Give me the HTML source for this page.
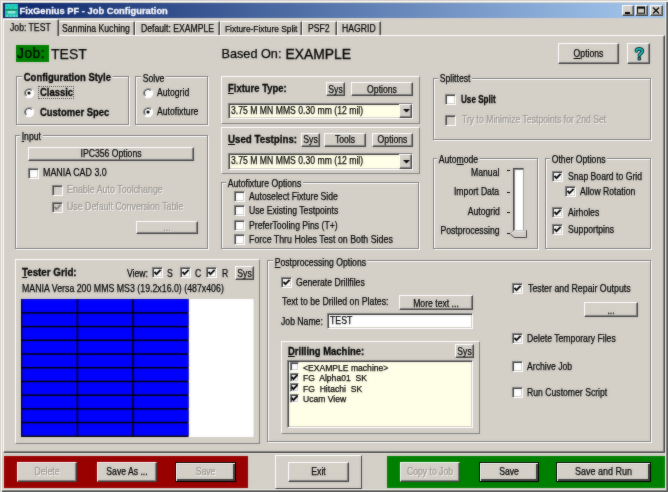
<!DOCTYPE html><html><head><meta charset="utf-8"><style>
html,body{margin:0;padding:0;background:#d4d0c8;}
body{width:668px;height:492px;background:#d4d0c8;position:relative;overflow:hidden;font-family:"Liberation Sans",sans-serif;color:#000;}
div,svg{position:absolute;box-sizing:border-box;}
.L{left:0;top:0;width:668px;height:492px;background:#d4d0c8;overflow:hidden;}
.t{white-space:nowrap;line-height:normal;-webkit-text-stroke:0.25px currentColor;}
.dis{color:#9a968f;text-shadow:1px 1px 0 #fff;}
.btn{background:#d4d0c8;border-top:1px solid #fff;border-left:1px solid #fff;border-right:1px solid #404040;border-bottom:1px solid #404040;box-shadow:inset -1px -1px 0 #808080;}
.btn.def{border:1px solid #000;box-shadow:inset 1px 1px 0 #fff,inset -2px -2px 0 #404040,inset -1px -1px 0 #808080;}
.grp{border:1px solid #808080;box-shadow:inset 1px 1px 0 #fff,1px 1px 0 #fff;}
.chk{background:#fff;border-top:1px solid #808080;border-left:1px solid #808080;border-right:1px solid #fff;border-bottom:1px solid #fff;box-shadow:inset 1px 1px 0 #404040,inset -1px -1px 0 #d4d0c8;}
.chk.cdis{background:#d4d0c8;}
.rz{border-top:1px solid #fff;border-left:1px solid #fff;border-right:1px solid #808080;border-bottom:1px solid #808080;}
.sk{border-top:1px solid #808080;border-left:1px solid #808080;border-right:1px solid #fff;border-bottom:1px solid #fff;box-shadow:inset 1px 1px 0 #404040,inset -1px -1px 0 #d4d0c8;}
</style></head><body>
<div class="L" style="filter:blur(1px)"><div class="" style="left:0px;top:0px;width:668px;height:492px;box-shadow:inset 1px 1px 0 #d4d0c8,inset 2px 2px 0 #fff,inset -1px -1px 0 #404040,inset -2px -2px 0 #808080,inset -3px -3px 0 #f4f2ec;"></div>
<div class="" style="left:3px;top:3px;width:662px;height:15px;background:linear-gradient(to right,#0a246a,#a6caf0);"></div>
<svg style="left:5px;top:4px" width="13" height="13" viewBox="0 0 13 13"><rect width="13" height="13" fill="#1cc4b4"/><rect x="0.5" y="0.5" width="12" height="4.5" fill="#26dcc8"/><path d="M2 2h1.2v1H2zM5 1.5h1.2v1H5zM8 2h1.2v1H8zM10.5 1.5h1.2v1h-1.2zM3.5 3.6h1.2v1H3.5zM7 3.6h1.2v1H7z" fill="#0a9080"/><rect x="0.5" y="5.2" width="12" height="1.3" fill="#0c7a40"/><path d="M2.2 7 H10.8 L9.8 9.6 H3.2 Z" fill="#9ee6dc"/><path d="M1 11.6h2v1H1zM4.5 11.6h2v1h-2zM8 11.6h2v1H8zM11 11.6h1.5v1H11z" fill="#c8f4ee"/></svg>
<div class="t " style="top:5.95px;font-size:9.34px;left:19.6px;transform-origin:0 0;font-weight:700;-webkit-text-stroke:0.3px currentColor;color:#fff;">FixGenius PF - Job Configuration</div>
<div class="btn" style="left:622px;top:5px;width:12px;height:11px;"></div>
<div class="btn" style="left:635px;top:5px;width:13px;height:11px;"></div>
<div class="btn" style="left:650px;top:5px;width:13px;height:11px;"></div>
<svg style="left:622px;top:5px" width="41" height="11" viewBox="0 0 41 11"><rect x="3" y="7" width="5" height="2" fill="#000"/><rect x="15.5" y="2.2" width="7" height="6" fill="none" stroke="#000" stroke-width="1"/><rect x="15" y="1.7" width="8" height="2" fill="#000"/><path d="M31 2.5 L37 8.5 M37 2.5 L31 8.5" stroke="#000" stroke-width="1.4"/></svg>
<div class="" style="left:58px;top:21px;width:77px;height:15px;border-top:1px solid #fff;border-left:1px solid #fff;border-right:1px solid #404040;box-shadow:inset -1px 0 0 #808080;background:#d4d0c8;"></div>
<div class="t " style="top:22.99px;font-size:10.18px;left:62px;transform-origin:0 0;transform:scaleX(0.85);">Sanmina Kuching</div>
<div class="" style="left:135px;top:21px;width:85px;height:15px;border-top:1px solid #fff;border-left:1px solid #fff;border-right:1px solid #404040;box-shadow:inset -1px 0 0 #808080;background:#d4d0c8;"></div>
<div class="t " style="top:22.99px;font-size:10.18px;left:141px;transform-origin:0 0;transform:scaleX(0.85);">Default: EXAMPLE</div>
<div class="" style="left:220px;top:21px;width:82px;height:15px;border-top:1px solid #fff;border-left:1px solid #fff;border-right:1px solid #404040;box-shadow:inset -1px 0 0 #808080;background:#d4d0c8;"></div>
<div class="t " style="top:23.31px;font-size:9.83px;left:224.8px;transform-origin:0 0;transform:scaleX(0.85);">Fixture-Fixture Split</div>
<div class="" style="left:302px;top:21px;width:35px;height:15px;border-top:1px solid #fff;border-left:1px solid #fff;border-right:1px solid #404040;box-shadow:inset -1px 0 0 #808080;background:#d4d0c8;"></div>
<div class="t " style="top:22.99px;font-size:10.18px;left:307.6px;transform-origin:0 0;transform:scaleX(0.85);">PSF2</div>
<div class="" style="left:337px;top:21px;width:44px;height:15px;border-top:1px solid #fff;border-left:1px solid #fff;border-right:1px solid #404040;box-shadow:inset -1px 0 0 #808080;background:#d4d0c8;"></div>
<div class="t " style="top:22.99px;font-size:10.18px;left:342px;transform-origin:0 0;transform:scaleX(0.85);">HAGRID</div>
<div class="" style="left:3px;top:35px;width:662px;height:418px;border-top:1px solid #fff;border-left:1px solid #fff;border-right:1px solid #404040;border-bottom:1px solid #404040;box-shadow:inset -1px -1px 0 #808080;"></div>
<div class="" style="left:3px;top:19px;width:56px;height:17px;border-top:1px solid #fff;border-left:1px solid #fff;border-right:1px solid #404040;box-shadow:inset -1px 0 0 #808080;background:#d4d0c8;"></div>
<div class="" style="left:4px;top:35px;width:53px;height:2px;background:#d4d0c8;"></div>
<div class="t " style="top:22.39px;font-size:10.18px;left:9.7px;transform-origin:0 0;transform:scaleX(0.85);">Job: TEST</div>
<div class="" style="left:16px;top:45px;width:33px;height:17px;background:#008000;"></div>
<div class="t " style="top:45.31px;font-size:14.8px;left:17px;transform-origin:0 0;transform:scaleX(0.93);letter-spacing:0.55px;">Job:</div>
<div class="t " style="top:45.07px;font-size:15.07px;left:51.2px;transform-origin:0 0;transform:scaleX(0.93);">TEST</div>
<div class="t " style="top:46.81px;font-size:12.7px;left:221.5px;transform-origin:0 0;">Based On:</div>
<div class="t " style="top:45.76px;font-size:13.86px;left:285.5px;transform-origin:0 0;-webkit-text-stroke:0.35px #000;">EXAMPLE</div>
<div class="btn" style="left:558px;top:43px;width:61px;height:21px;"></div>
<div class="t " style="left:558px;width:61px;text-align:center;top:47.79px;font-size:10.18px;transform:scaleX(0.85);"><u>O</u>ptions</div>
<div class="btn" style="left:627px;top:43px;width:23px;height:21px;"></div>
<svg style="left:633px;top:46px" width="12" height="15" viewBox="0 0 12 15"><path d="M3.4 5.0 C3.4 2.3 9.4 2.1 9.4 5.0 C9.4 7.2 6.4 7.4 6.4 9.4" stroke="#0a3030" stroke-width="3.6" fill="none" stroke-linecap="round"/><path d="M3.4 5.0 C3.4 2.3 9.4 2.1 9.4 5.0 C9.4 7.2 6.4 7.4 6.4 9.4" stroke="#10c0c0" stroke-width="1.7" fill="none" stroke-linecap="round"/><circle cx="6.3" cy="12.7" r="1.9" fill="#0a3030"/><circle cx="6.3" cy="12.6" r="0.9" fill="#10a0a0"/></svg>
<div class="grp" style="left:16px;top:76px;width:113px;height:49px;"></div>
<div class="t " style="top:71.17px;font-size:10.64px;left:24px;transform-origin:0 0;transform:scaleX(0.89);font-weight:700;-webkit-text-stroke:0.3px currentColor;background:#d4d0c8;padding:0 2px;margin-left:-2px;">Configuration Style</div>
<svg style="left:22.8px;top:86.8px" width="12" height="12" viewBox="0 0 12 12"><circle cx="6" cy="6" r="5.2" fill="#fff"/><path d="M9.25 2.75 A4.6 4.6 0 0 0 2.75 9.25" stroke="#808080" stroke-width="1.1" fill="none"/><path d="M8.55 3.45 A3.6 3.6 0 0 0 3.45 8.55" stroke="#404040" stroke-width="1.0" fill="none"/><circle cx="6" cy="6" r="1.6" fill="#000"/></svg>
<svg style="left:22.8px;top:105.6px" width="12" height="12" viewBox="0 0 12 12"><circle cx="6" cy="6" r="5.2" fill="#fff"/><path d="M9.25 2.75 A4.6 4.6 0 0 0 2.75 9.25" stroke="#808080" stroke-width="1.1" fill="none"/><path d="M8.55 3.45 A3.6 3.6 0 0 0 3.45 8.55" stroke="#404040" stroke-width="1.0" fill="none"/></svg>
<div style="left:38px;top:86px;width:36px;height:13px;border:1px dotted #505050;"></div>
<div class="t " style="top:86.37px;font-size:10.64px;left:39.5px;transform-origin:0 0;transform:scaleX(0.89);font-weight:700;-webkit-text-stroke:0.3px currentColor;">Classic</div>
<div class="t " style="top:105.87px;font-size:10.64px;left:39.6px;transform-origin:0 0;transform:scaleX(0.89);font-weight:700;-webkit-text-stroke:0.3px currentColor;">Customer Spec</div>
<div class="grp" style="left:135px;top:76px;width:73px;height:49px;"></div>
<div class="t " style="top:72.79px;font-size:10.18px;left:142.5px;transform-origin:0 0;transform:scaleX(0.85);background:#d4d0c8;padding:0 2px;margin-left:-2px;">Solve</div>
<svg style="left:141.5px;top:86.7px" width="12" height="12" viewBox="0 0 12 12"><circle cx="6" cy="6" r="5.2" fill="#fff"/><path d="M9.25 2.75 A4.6 4.6 0 0 0 2.75 9.25" stroke="#808080" stroke-width="1.1" fill="none"/><path d="M8.55 3.45 A3.6 3.6 0 0 0 3.45 8.55" stroke="#404040" stroke-width="1.0" fill="none"/></svg>
<svg style="left:141.5px;top:105.7px" width="12" height="12" viewBox="0 0 12 12"><circle cx="6" cy="6" r="5.2" fill="#fff"/><path d="M9.25 2.75 A4.6 4.6 0 0 0 2.75 9.25" stroke="#808080" stroke-width="1.1" fill="none"/><path d="M8.55 3.45 A3.6 3.6 0 0 0 3.45 8.55" stroke="#404040" stroke-width="1.0" fill="none"/><circle cx="6" cy="6" r="1.6" fill="#000"/></svg>
<div class="t " style="top:86.99px;font-size:10.18px;left:156.7px;transform-origin:0 0;transform:scaleX(0.85);">Autogrid</div>
<div class="t " style="top:105.99px;font-size:10.18px;left:156.7px;transform-origin:0 0;transform:scaleX(0.85);">Autofixture</div>
<div class="grp" style="left:15px;top:135px;width:193px;height:114px;"></div>
<div class="t " style="top:130.99px;font-size:10.18px;left:21.8px;transform-origin:0 0;transform:scaleX(0.85);background:#d4d0c8;padding:0 2px;margin-left:-2px;"><u>I</u>nput</div>
<div class="btn" style="left:28px;top:147px;width:166px;height:14px;"></div>
<div class="t " style="left:28px;width:166px;text-align:center;top:147.59px;font-size:10.18px;transform:scaleX(0.85);">IPC356 Options</div>
<div class="chk" style="left:28px;top:168px;width:11px;height:11px;"></div>
<div class="t " style="top:167.32px;font-size:10.47px;left:42.8px;transform-origin:0 0;transform:scaleX(0.85);">MANIA CAD 3.0</div>
<div class="chk cdis" style="left:52px;top:185px;width:11px;height:11px;"></div>
<div class="t dis" style="top:184.12px;font-size:10.47px;left:67px;transform-origin:0 0;transform:scaleX(0.85);">Enable Auto Toolchange</div>
<div class="chk cdis" style="left:52px;top:202px;width:11px;height:11px;"><svg width="11" height="11" viewBox="0 0 11 11" style="position:absolute;left:-1px;top:-1px"><path d="M2.5 4.8 L4.5 7.1 L8.6 2.9" stroke="#808080" stroke-width="1.9" fill="none"/></svg></div>
<div class="t dis" style="top:201.43px;font-size:10.35px;left:67px;transform-origin:0 0;transform:scaleX(0.85);">Use Default Conversion Table</div>
<div class="btn" style="left:136px;top:221px;width:62px;height:13px;"></div>
<div class="t dis" style="left:136px;width:62px;text-align:center;top:222.29px;font-size:10.18px;transform:scaleX(0.85);">...</div>
<div class="rz" style="left:221px;top:76px;width:199px;height:48px;"></div>
<div class="t " style="top:82.17px;font-size:10.64px;left:228.2px;transform-origin:0 0;transform:scaleX(0.89);font-weight:700;-webkit-text-stroke:0.3px currentColor;"><u>F</u>ixture Type:</div>
<div class="btn" style="left:326px;top:82px;width:19px;height:14px;"></div>
<div class="t " style="left:326px;width:19px;text-align:center;top:83.59px;font-size:10.18px;transform:scaleX(0.85);">Sys</div>
<div class="btn" style="left:351px;top:82px;width:62px;height:14px;"></div>
<div class="t " style="left:351px;width:62px;text-align:center;top:83.59px;font-size:10.18px;transform:scaleX(0.85);">Options</div>
<div class="sk" style="left:228px;top:103px;width:185px;height:16px;background:#ffffe8;"></div>
<div class="t " style="top:104.79px;font-size:10.18px;left:231px;transform-origin:0 0;transform:scaleX(0.85);">3.75 M MN MMS 0.30 mm (12 mil)</div>
<div class="btn" style="left:399px;top:104px;width:13px;height:14px;"></div>
<svg style="left:400.5px;top:107px" width="11" height="8" viewBox="0 0 11 8"><path d="M2 2 H9 L5.5 5.5 Z" fill="#000"/></svg>
<div class="rz" style="left:221px;top:127px;width:199px;height:47px;"></div>
<div class="t " style="top:132.7px;font-size:10.94px;left:228.2px;transform-origin:0 0;transform:scaleX(0.89);font-weight:700;-webkit-text-stroke:0.3px currentColor;"><u>U</u>sed Testpins:</div>
<div class="btn" style="left:301px;top:133px;width:19px;height:14px;"></div>
<div class="t " style="left:301px;width:19px;text-align:center;top:133.59px;font-size:10.18px;transform:scaleX(0.85);">Sys</div>
<div class="btn" style="left:324px;top:133px;width:42px;height:14px;"></div>
<div class="t " style="left:324px;width:42px;text-align:center;top:133.59px;font-size:10.18px;transform:scaleX(0.85);">Tools</div>
<div class="btn" style="left:372px;top:133px;width:41px;height:14px;"></div>
<div class="t " style="left:372px;width:41px;text-align:center;top:133.59px;font-size:10.18px;transform:scaleX(0.85);">Options</div>
<div class="sk" style="left:228px;top:153px;width:185px;height:17px;background:#ffffe8;"></div>
<div class="t " style="top:155.09px;font-size:10.18px;left:231px;transform-origin:0 0;transform:scaleX(0.85);">3.75 M MN MMS 0.30 mm (12 mil)</div>
<div class="btn" style="left:399px;top:154px;width:13px;height:15px;"></div>
<svg style="left:400.5px;top:157.5px" width="11" height="8" viewBox="0 0 11 8"><path d="M2 2 H9 L5.5 5.5 Z" fill="#000"/></svg>
<div class="grp" style="left:221px;top:182px;width:198px;height:67px;"></div>
<div class="t " style="top:177.59px;font-size:10.18px;left:227.8px;transform-origin:0 0;transform:scaleX(0.85);background:#d4d0c8;padding:0 2px;margin-left:-2px;">Autofixture Options</div>
<div class="chk" style="left:234px;top:191px;width:11px;height:11px;"></div>
<div class="t " style="top:191.09px;font-size:10.18px;left:249.3px;transform-origin:0 0;transform:scaleX(0.85);">Autoselect Fixture Side</div>
<div class="chk" style="left:234px;top:205px;width:11px;height:11px;"></div>
<div class="t " style="top:205.09px;font-size:10.18px;left:249.3px;transform-origin:0 0;transform:scaleX(0.85);">Use Existing Testpoints</div>
<div class="chk" style="left:234px;top:220px;width:11px;height:11px;"></div>
<div class="t " style="top:220.09px;font-size:10.18px;left:249.3px;transform-origin:0 0;transform:scaleX(0.85);">PreferTooling Pins (T+)</div>
<div class="chk" style="left:234px;top:234px;width:11px;height:11px;"></div>
<div class="t " style="top:233.91px;font-size:10.38px;left:249.3px;transform-origin:0 0;transform:scaleX(0.85);">Force Thru Holes Test on Both Sides</div>
<div class="grp" style="left:433px;top:78px;width:218px;height:62px;"></div>
<div class="t " style="top:73.39px;font-size:10.18px;left:439.6px;transform-origin:0 0;transform:scaleX(0.85);background:#d4d0c8;padding:0 2px;margin-left:-2px;">Splittest</div>
<div class="chk" style="left:445px;top:94px;width:11px;height:11px;"></div>
<div class="t " style="top:92.64px;font-size:11.45px;left:461px;transform-origin:0 0;transform:scaleX(0.71);font-weight:700;-webkit-text-stroke:0.3px currentColor;">Use Split</div>
<div class="chk cdis" style="left:445px;top:115px;width:11px;height:11px;"></div>
<div class="t dis" style="top:114.39px;font-size:10.18px;left:461.8px;transform-origin:0 0;transform:scaleX(0.85);">Try to Minimize Testpoints for 2nd Set</div>
<div class="grp" style="left:433px;top:158px;width:105px;height:91px;"></div>
<div class="t " style="top:154.29px;font-size:10.18px;left:439px;transform-origin:0 0;transform:scaleX(0.85);background:#d4d0c8;padding:0 2px;margin-left:-2px;">Auto<u>m</u>ode</div>
<div class="t " style="top:166.99px;font-size:10.18px;right:168.4px;transform-origin:100% 0;transform:scaleX(0.85);">Manual</div>
<div class="t " style="top:186.39px;font-size:10.18px;right:168.4px;transform-origin:100% 0;transform:scaleX(0.85);">Import Data</div>
<div class="t " style="top:205.79px;font-size:10.18px;right:168.4px;transform-origin:100% 0;transform:scaleX(0.85);">Autogrid</div>
<div class="t " style="top:224.59px;font-size:10.18px;right:168.4px;transform-origin:100% 0;transform:scaleX(0.85);">Postprocessing</div>
<div style="left:506.5px;top:170.2px;width:3px;height:1.2px;background:#000;"></div>
<div style="left:506.5px;top:191.5px;width:3px;height:1.2px;background:#000;"></div>
<div style="left:506.5px;top:212.2px;width:3px;height:1.2px;background:#000;"></div>
<div style="left:506.5px;top:232.9px;width:3px;height:1.2px;background:#000;"></div>
<div class="" style="left:513px;top:168px;width:11px;height:69px;background:#fff;border-top:1px solid #404040;border-left:1px solid #404040;border-right:1px solid #a0a0a0;box-shadow:inset 1px 1px 0 #808080;"></div>
<svg style="left:510px;top:229.5px" width="18" height="8" viewBox="0 0 18 8"><path d="M0.5 4 L4 0.5 H16.5 V7.5 H4 Z" fill="#d4d0c8" stroke="#404040" stroke-width="1"/><path d="M0.8 4 L4 0.8 H16" stroke="#fff" stroke-width="1" fill="none"/></svg>
<div class="grp" style="left:545px;top:158px;width:106px;height:91px;"></div>
<div class="t " style="top:154.29px;font-size:10.18px;left:552px;transform-origin:0 0;transform:scaleX(0.85);background:#d4d0c8;padding:0 2px;margin-left:-2px;">Other Options</div>
<div class="chk" style="left:552px;top:171px;width:11px;height:11px;"><svg width="11" height="11" viewBox="0 0 11 11" style="position:absolute;left:-1px;top:-1px"><path d="M2.5 4.8 L4.5 7.1 L8.6 2.9" stroke="#000" stroke-width="1.9" fill="none"/></svg></div>
<div class="t " style="top:171.39px;font-size:10.18px;left:568px;transform-origin:0 0;transform:scaleX(0.85);">Snap Board to Grid</div>
<div class="chk" style="left:565px;top:186px;width:11px;height:11px;"><svg width="11" height="11" viewBox="0 0 11 11" style="position:absolute;left:-1px;top:-1px"><path d="M2.5 4.8 L4.5 7.1 L8.6 2.9" stroke="#000" stroke-width="1.9" fill="none"/></svg></div>
<div class="t " style="top:185.59px;font-size:10.18px;left:579.7px;transform-origin:0 0;transform:scaleX(0.85);">Allow Rotation</div>
<div class="chk" style="left:552px;top:207px;width:11px;height:11px;"><svg width="11" height="11" viewBox="0 0 11 11" style="position:absolute;left:-1px;top:-1px"><path d="M2.5 4.8 L4.5 7.1 L8.6 2.9" stroke="#000" stroke-width="1.9" fill="none"/></svg></div>
<div class="t " style="top:207.39px;font-size:10.18px;left:568px;transform-origin:0 0;transform:scaleX(0.85);">Airholes</div>
<div class="chk" style="left:552px;top:224px;width:11px;height:11px;"><svg width="11" height="11" viewBox="0 0 11 11" style="position:absolute;left:-1px;top:-1px"><path d="M2.5 4.8 L4.5 7.1 L8.6 2.9" stroke="#000" stroke-width="1.9" fill="none"/></svg></div>
<div class="t " style="top:223.59px;font-size:10.18px;left:568px;transform-origin:0 0;transform:scaleX(0.85);">Supportpins</div>
<div class="rz" style="left:15px;top:259px;width:245px;height:185px;"></div>
<div class="t " style="top:265.87px;font-size:10.98px;left:21.7px;transform-origin:0 0;transform:scaleX(0.89);font-weight:700;-webkit-text-stroke:0.3px currentColor;"><u>T</u>ester Grid:</div>
<div class="t " style="top:268.39px;font-size:10.18px;left:127.2px;transform-origin:0 0;transform:scaleX(0.85);">View:</div>
<div class="chk" style="left:152px;top:267px;width:11px;height:11px;"><svg width="11" height="11" viewBox="0 0 11 11" style="position:absolute;left:-1px;top:-1px"><path d="M2.5 4.8 L4.5 7.1 L8.6 2.9" stroke="#000" stroke-width="1.9" fill="none"/></svg></div>
<div class="t " style="top:268.39px;font-size:10.18px;left:167.2px;transform-origin:0 0;transform:scaleX(0.85);">S</div>
<div class="chk" style="left:180px;top:267px;width:11px;height:11px;"><svg width="11" height="11" viewBox="0 0 11 11" style="position:absolute;left:-1px;top:-1px"><path d="M2.5 4.8 L4.5 7.1 L8.6 2.9" stroke="#000" stroke-width="1.9" fill="none"/></svg></div>
<div class="t " style="top:268.39px;font-size:10.18px;left:195.2px;transform-origin:0 0;transform:scaleX(0.85);">C</div>
<div class="chk" style="left:206px;top:267px;width:11px;height:11px;"><svg width="11" height="11" viewBox="0 0 11 11" style="position:absolute;left:-1px;top:-1px"><path d="M2.5 4.8 L4.5 7.1 L8.6 2.9" stroke="#000" stroke-width="1.9" fill="none"/></svg></div>
<div class="t " style="top:268.39px;font-size:10.18px;left:221.5px;transform-origin:0 0;transform:scaleX(0.85);">R</div>
<div class="btn" style="left:235px;top:266px;width:19px;height:14px;"></div>
<div class="t " style="left:235px;width:19px;text-align:center;top:267.59px;font-size:10.18px;transform:scaleX(0.85);">Sys</div>
<div class="t " style="top:282.93px;font-size:10.35px;left:21.7px;transform-origin:0 0;transform:scaleX(0.85);">MANIA Versa 200 MMS MS3 (19.2x16.0) (487x406)</div>
<svg style="left:0;top:0" width="668" height="492" viewBox="0 0 668 492"><rect x="21" y="299" width="232.6" height="138" fill="#fff"/><rect x="21" y="299" width="167.6" height="138" fill="#000"/><rect x="22.25" y="299.2" width="54.4" height="12.96" fill="#0000ff"/><rect x="22.25" y="313.66" width="54.4" height="12.21" fill="#0000ff"/><rect x="22.25" y="327.37" width="54.4" height="12.21" fill="#0000ff"/><rect x="22.25" y="341.08" width="54.4" height="12.21" fill="#0000ff"/><rect x="22.25" y="354.79" width="54.4" height="12.21" fill="#0000ff"/><rect x="22.25" y="368.5" width="54.4" height="12.21" fill="#0000ff"/><rect x="22.25" y="382.21" width="54.4" height="12.21" fill="#0000ff"/><rect x="22.25" y="395.92" width="54.4" height="12.21" fill="#0000ff"/><rect x="22.25" y="409.63" width="54.4" height="12.21" fill="#0000ff"/><rect x="22.25" y="423.34" width="54.4" height="12.21" fill="#0000ff"/><rect x="78.15" y="299.2" width="54.1" height="12.96" fill="#0000ff"/><rect x="78.15" y="313.66" width="54.1" height="12.21" fill="#0000ff"/><rect x="78.15" y="327.37" width="54.1" height="12.21" fill="#0000ff"/><rect x="78.15" y="341.08" width="54.1" height="12.21" fill="#0000ff"/><rect x="78.15" y="354.79" width="54.1" height="12.21" fill="#0000ff"/><rect x="78.15" y="368.5" width="54.1" height="12.21" fill="#0000ff"/><rect x="78.15" y="382.21" width="54.1" height="12.21" fill="#0000ff"/><rect x="78.15" y="395.92" width="54.1" height="12.21" fill="#0000ff"/><rect x="78.15" y="409.63" width="54.1" height="12.21" fill="#0000ff"/><rect x="78.15" y="423.34" width="54.1" height="12.21" fill="#0000ff"/><rect x="133.75" y="299.2" width="54.85" height="12.96" fill="#0000ff"/><rect x="133.75" y="313.66" width="54.85" height="12.21" fill="#0000ff"/><rect x="133.75" y="327.37" width="54.85" height="12.21" fill="#0000ff"/><rect x="133.75" y="341.08" width="54.85" height="12.21" fill="#0000ff"/><rect x="133.75" y="354.79" width="54.85" height="12.21" fill="#0000ff"/><rect x="133.75" y="368.5" width="54.85" height="12.21" fill="#0000ff"/><rect x="133.75" y="382.21" width="54.85" height="12.21" fill="#0000ff"/><rect x="133.75" y="395.92" width="54.85" height="12.21" fill="#0000ff"/><rect x="133.75" y="409.63" width="54.85" height="12.21" fill="#0000ff"/><rect x="133.75" y="423.34" width="54.85" height="12.21" fill="#0000ff"/></svg>
<div class="grp" style="left:267px;top:260px;width:384px;height:182px;"></div>
<div class="t " style="top:257.29px;font-size:10.18px;left:274.8px;transform-origin:0 0;transform:scaleX(0.85);background:#d4d0c8;padding:0 2px;margin-left:-2px;"><u>P</u>ostprocessing Options</div>
<div class="chk" style="left:281px;top:277px;width:11px;height:11px;"><svg width="11" height="11" viewBox="0 0 11 11" style="position:absolute;left:-1px;top:-1px"><path d="M2.5 4.8 L4.5 7.1 L8.6 2.9" stroke="#000" stroke-width="1.9" fill="none"/></svg></div>
<div class="t " style="top:276.79px;font-size:10.18px;left:295.8px;transform-origin:0 0;transform:scaleX(0.85);">Generate Drillfiles</div>
<div class="t " style="top:296.38px;font-size:10.3px;left:281.6px;transform-origin:0 0;transform:scaleX(0.85);">Text to be Drilled on Plates:</div>
<div class="btn" style="left:399px;top:295px;width:74px;height:15px;"></div>
<div class="t " style="left:399px;width:74px;text-align:center;top:298.19px;font-size:10.18px;transform:scaleX(0.85);">More text ...</div>
<div class="t " style="top:316.39px;font-size:10.18px;left:280.8px;transform-origin:0 0;transform:scaleX(0.85);">Job Name:</div>
<div class="sk" style="left:327px;top:313px;width:146px;height:16px;background:#fff;"></div>
<div class="t " style="top:315.23px;font-size:10.35px;left:330px;transform-origin:0 0;transform:scaleX(0.85);">TEST</div>
<div class="rz" style="left:281px;top:341px;width:199px;height:93px;"></div>
<div class="t " style="top:345.27px;font-size:10.64px;left:287.6px;transform-origin:0 0;transform:scaleX(0.89);font-weight:700;-webkit-text-stroke:0.3px currentColor;"><u>D</u>rilling Machine:</div>
<div class="btn" style="left:455px;top:344px;width:19px;height:14px;"></div>
<div class="t " style="left:455px;width:19px;text-align:center;top:345.79px;font-size:10.18px;transform:scaleX(0.85);">Sys</div>
<div class="sk" style="left:287px;top:360px;width:186px;height:68px;background:#ffffe8;"></div>
<div class="chk" style="left:290px;top:362px;width:9px;height:9px;"></div>
<div class="t " style="top:362.78px;font-size:8.86px;left:302.8px;transform-origin:0 0;transform:scaleX(0.97);">&lt;EXAMPLE machine&gt;</div>
<div class="chk" style="left:290px;top:372.5px;width:9px;height:9px;"><svg width="9" height="9" viewBox="0 0 9 9" style="position:absolute;left:-1px;top:-1px"><path d="M1.6 3.9 L3.5 6.1 L7.4 1.9" stroke="#000" stroke-width="1.9" fill="none"/></svg></div>
<div class="t " style="top:373.28px;font-size:8.86px;left:302.8px;transform-origin:0 0;transform:scaleX(0.97);">FG&nbsp; Alpha01&nbsp; SK</div>
<div class="chk" style="left:290px;top:383px;width:9px;height:9px;"><svg width="9" height="9" viewBox="0 0 9 9" style="position:absolute;left:-1px;top:-1px"><path d="M1.6 3.9 L3.5 6.1 L7.4 1.9" stroke="#000" stroke-width="1.9" fill="none"/></svg></div>
<div class="t " style="top:383.78px;font-size:8.86px;left:302.8px;transform-origin:0 0;transform:scaleX(0.97);">FG&nbsp; Hitachi&nbsp; SK</div>
<div class="chk" style="left:290px;top:393.5px;width:9px;height:9px;"><svg width="9" height="9" viewBox="0 0 9 9" style="position:absolute;left:-1px;top:-1px"><path d="M1.6 3.9 L3.5 6.1 L7.4 1.9" stroke="#000" stroke-width="1.9" fill="none"/></svg></div>
<div class="t " style="top:394.28px;font-size:8.86px;left:302.8px;transform-origin:0 0;transform:scaleX(0.97);">Ucam View</div>
<div class="chk" style="left:512px;top:283px;width:11px;height:11px;"><svg width="11" height="11" viewBox="0 0 11 11" style="position:absolute;left:-1px;top:-1px"><path d="M2.5 4.8 L4.5 7.1 L8.6 2.9" stroke="#000" stroke-width="1.9" fill="none"/></svg></div>
<div class="t " style="top:283.23px;font-size:10.35px;left:527.6px;transform-origin:0 0;transform:scaleX(0.85);">Tester and Repair Outputs</div>
<div class="btn" style="left:584px;top:302px;width:54px;height:15px;"></div>
<div class="t " style="left:584px;width:54px;text-align:center;top:304.79px;font-size:10.18px;transform:scaleX(0.85);">...</div>
<div class="chk" style="left:512px;top:333px;width:11px;height:11px;"><svg width="11" height="11" viewBox="0 0 11 11" style="position:absolute;left:-1px;top:-1px"><path d="M2.5 4.8 L4.5 7.1 L8.6 2.9" stroke="#000" stroke-width="1.9" fill="none"/></svg></div>
<div class="t " style="top:333.29px;font-size:10.18px;left:526.8px;transform-origin:0 0;transform:scaleX(0.85);">Delete Temporary Files</div>
<div class="chk" style="left:512px;top:361px;width:11px;height:11px;"></div>
<div class="t " style="top:361.19px;font-size:10.18px;left:526.8px;transform-origin:0 0;transform:scaleX(0.85);">Archive Job</div>
<div class="chk" style="left:512px;top:387px;width:11px;height:11px;"></div>
<div class="t " style="top:387.39px;font-size:10.18px;left:526.8px;transform-origin:0 0;transform:scaleX(0.85);">Run Customer Script</div>
<div class="" style="left:3px;top:453px;width:662px;height:1px;background:#ece9e2;"></div>
<div class="" style="left:4px;top:456px;width:244px;height:32px;background:#990000;"></div>
<div class="btn" style="left:17px;top:462px;width:60px;height:20px;"></div>
<div class="t dis" style="left:17px;width:60px;text-align:center;top:465.79px;font-size:10.18px;transform:scaleX(0.85);">Delete</div>
<div class="btn" style="left:97px;top:462px;width:60px;height:20px;"></div>
<div class="t " style="left:97px;width:60px;text-align:center;top:465.79px;font-size:10.18px;transform:scaleX(0.85);">Save As ...</div>
<div class="btn def" style="left:175px;top:462px;width:61px;height:20px;"></div>
<div class="t dis" style="left:175px;width:61px;text-align:center;top:465.79px;font-size:10.18px;transform:scaleX(0.85);">Save</div>
<div class="rz" style="left:275px;top:455px;width:87px;height:34px;border-right-color:#404040;border-bottom-color:#404040;"></div>
<div class="btn" style="left:288px;top:462px;width:61px;height:20px;"></div>
<div class="t " style="left:288px;width:61px;text-align:center;top:465.79px;font-size:10.18px;transform:scaleX(0.85);">Exit</div>
<div class="" style="left:387px;top:456px;width:278px;height:32px;background:#008000;"></div>
<div class="btn" style="left:400px;top:462px;width:60px;height:20px;"></div>
<div class="t dis" style="left:400px;width:60px;text-align:center;top:465.79px;font-size:10.18px;transform:scaleX(0.85);">Copy to Job</div>
<div class="btn def" style="left:479px;top:462px;width:60px;height:20px;"></div>
<div class="t " style="left:479px;width:60px;text-align:center;top:465.79px;font-size:10.18px;transform:scaleX(0.85);">Save</div>
<div class="btn def" style="left:556px;top:462px;width:95px;height:20px;"></div>
<div class="t " style="left:556px;width:95px;text-align:center;top:465.42px;font-size:10.59px;transform:scaleX(0.85);">Save and Run</div></div>
<div class="L" style="opacity:0.6;filter:blur(0.3px)"><div class="" style="left:0px;top:0px;width:668px;height:492px;box-shadow:inset 1px 1px 0 #d4d0c8,inset 2px 2px 0 #fff,inset -1px -1px 0 #404040,inset -2px -2px 0 #808080,inset -3px -3px 0 #f4f2ec;"></div>
<div class="" style="left:3px;top:3px;width:662px;height:15px;background:linear-gradient(to right,#0a246a,#a6caf0);"></div>
<svg style="left:5px;top:4px" width="13" height="13" viewBox="0 0 13 13"><rect width="13" height="13" fill="#1cc4b4"/><rect x="0.5" y="0.5" width="12" height="4.5" fill="#26dcc8"/><path d="M2 2h1.2v1H2zM5 1.5h1.2v1H5zM8 2h1.2v1H8zM10.5 1.5h1.2v1h-1.2zM3.5 3.6h1.2v1H3.5zM7 3.6h1.2v1H7z" fill="#0a9080"/><rect x="0.5" y="5.2" width="12" height="1.3" fill="#0c7a40"/><path d="M2.2 7 H10.8 L9.8 9.6 H3.2 Z" fill="#9ee6dc"/><path d="M1 11.6h2v1H1zM4.5 11.6h2v1h-2zM8 11.6h2v1H8zM11 11.6h1.5v1H11z" fill="#c8f4ee"/></svg>
<div class="t " style="top:5.95px;font-size:9.34px;left:19.6px;transform-origin:0 0;font-weight:700;-webkit-text-stroke:0.3px currentColor;color:#fff;">FixGenius PF - Job Configuration</div>
<div class="btn" style="left:622px;top:5px;width:12px;height:11px;"></div>
<div class="btn" style="left:635px;top:5px;width:13px;height:11px;"></div>
<div class="btn" style="left:650px;top:5px;width:13px;height:11px;"></div>
<svg style="left:622px;top:5px" width="41" height="11" viewBox="0 0 41 11"><rect x="3" y="7" width="5" height="2" fill="#000"/><rect x="15.5" y="2.2" width="7" height="6" fill="none" stroke="#000" stroke-width="1"/><rect x="15" y="1.7" width="8" height="2" fill="#000"/><path d="M31 2.5 L37 8.5 M37 2.5 L31 8.5" stroke="#000" stroke-width="1.4"/></svg>
<div class="" style="left:58px;top:21px;width:77px;height:15px;border-top:1px solid #fff;border-left:1px solid #fff;border-right:1px solid #404040;box-shadow:inset -1px 0 0 #808080;background:#d4d0c8;"></div>
<div class="t " style="top:22.99px;font-size:10.18px;left:62px;transform-origin:0 0;transform:scaleX(0.85);">Sanmina Kuching</div>
<div class="" style="left:135px;top:21px;width:85px;height:15px;border-top:1px solid #fff;border-left:1px solid #fff;border-right:1px solid #404040;box-shadow:inset -1px 0 0 #808080;background:#d4d0c8;"></div>
<div class="t " style="top:22.99px;font-size:10.18px;left:141px;transform-origin:0 0;transform:scaleX(0.85);">Default: EXAMPLE</div>
<div class="" style="left:220px;top:21px;width:82px;height:15px;border-top:1px solid #fff;border-left:1px solid #fff;border-right:1px solid #404040;box-shadow:inset -1px 0 0 #808080;background:#d4d0c8;"></div>
<div class="t " style="top:23.31px;font-size:9.83px;left:224.8px;transform-origin:0 0;transform:scaleX(0.85);">Fixture-Fixture Split</div>
<div class="" style="left:302px;top:21px;width:35px;height:15px;border-top:1px solid #fff;border-left:1px solid #fff;border-right:1px solid #404040;box-shadow:inset -1px 0 0 #808080;background:#d4d0c8;"></div>
<div class="t " style="top:22.99px;font-size:10.18px;left:307.6px;transform-origin:0 0;transform:scaleX(0.85);">PSF2</div>
<div class="" style="left:337px;top:21px;width:44px;height:15px;border-top:1px solid #fff;border-left:1px solid #fff;border-right:1px solid #404040;box-shadow:inset -1px 0 0 #808080;background:#d4d0c8;"></div>
<div class="t " style="top:22.99px;font-size:10.18px;left:342px;transform-origin:0 0;transform:scaleX(0.85);">HAGRID</div>
<div class="" style="left:3px;top:35px;width:662px;height:418px;border-top:1px solid #fff;border-left:1px solid #fff;border-right:1px solid #404040;border-bottom:1px solid #404040;box-shadow:inset -1px -1px 0 #808080;"></div>
<div class="" style="left:3px;top:19px;width:56px;height:17px;border-top:1px solid #fff;border-left:1px solid #fff;border-right:1px solid #404040;box-shadow:inset -1px 0 0 #808080;background:#d4d0c8;"></div>
<div class="" style="left:4px;top:35px;width:53px;height:2px;background:#d4d0c8;"></div>
<div class="t " style="top:22.39px;font-size:10.18px;left:9.7px;transform-origin:0 0;transform:scaleX(0.85);">Job: TEST</div>
<div class="" style="left:16px;top:45px;width:33px;height:17px;background:#008000;"></div>
<div class="t " style="top:45.31px;font-size:14.8px;left:17px;transform-origin:0 0;transform:scaleX(0.93);letter-spacing:0.55px;">Job:</div>
<div class="t " style="top:45.07px;font-size:15.07px;left:51.2px;transform-origin:0 0;transform:scaleX(0.93);">TEST</div>
<div class="t " style="top:46.81px;font-size:12.7px;left:221.5px;transform-origin:0 0;">Based On:</div>
<div class="t " style="top:45.76px;font-size:13.86px;left:285.5px;transform-origin:0 0;-webkit-text-stroke:0.35px #000;">EXAMPLE</div>
<div class="btn" style="left:558px;top:43px;width:61px;height:21px;"></div>
<div class="t " style="left:558px;width:61px;text-align:center;top:47.79px;font-size:10.18px;transform:scaleX(0.85);"><u>O</u>ptions</div>
<div class="btn" style="left:627px;top:43px;width:23px;height:21px;"></div>
<svg style="left:633px;top:46px" width="12" height="15" viewBox="0 0 12 15"><path d="M3.4 5.0 C3.4 2.3 9.4 2.1 9.4 5.0 C9.4 7.2 6.4 7.4 6.4 9.4" stroke="#0a3030" stroke-width="3.6" fill="none" stroke-linecap="round"/><path d="M3.4 5.0 C3.4 2.3 9.4 2.1 9.4 5.0 C9.4 7.2 6.4 7.4 6.4 9.4" stroke="#10c0c0" stroke-width="1.7" fill="none" stroke-linecap="round"/><circle cx="6.3" cy="12.7" r="1.9" fill="#0a3030"/><circle cx="6.3" cy="12.6" r="0.9" fill="#10a0a0"/></svg>
<div class="grp" style="left:16px;top:76px;width:113px;height:49px;"></div>
<div class="t " style="top:71.17px;font-size:10.64px;left:24px;transform-origin:0 0;transform:scaleX(0.89);font-weight:700;-webkit-text-stroke:0.3px currentColor;background:#d4d0c8;padding:0 2px;margin-left:-2px;">Configuration Style</div>
<svg style="left:22.8px;top:86.8px" width="12" height="12" viewBox="0 0 12 12"><circle cx="6" cy="6" r="5.2" fill="#fff"/><path d="M9.25 2.75 A4.6 4.6 0 0 0 2.75 9.25" stroke="#808080" stroke-width="1.1" fill="none"/><path d="M8.55 3.45 A3.6 3.6 0 0 0 3.45 8.55" stroke="#404040" stroke-width="1.0" fill="none"/><circle cx="6" cy="6" r="1.6" fill="#000"/></svg>
<svg style="left:22.8px;top:105.6px" width="12" height="12" viewBox="0 0 12 12"><circle cx="6" cy="6" r="5.2" fill="#fff"/><path d="M9.25 2.75 A4.6 4.6 0 0 0 2.75 9.25" stroke="#808080" stroke-width="1.1" fill="none"/><path d="M8.55 3.45 A3.6 3.6 0 0 0 3.45 8.55" stroke="#404040" stroke-width="1.0" fill="none"/></svg>
<div style="left:38px;top:86px;width:36px;height:13px;border:1px dotted #505050;"></div>
<div class="t " style="top:86.37px;font-size:10.64px;left:39.5px;transform-origin:0 0;transform:scaleX(0.89);font-weight:700;-webkit-text-stroke:0.3px currentColor;">Classic</div>
<div class="t " style="top:105.87px;font-size:10.64px;left:39.6px;transform-origin:0 0;transform:scaleX(0.89);font-weight:700;-webkit-text-stroke:0.3px currentColor;">Customer Spec</div>
<div class="grp" style="left:135px;top:76px;width:73px;height:49px;"></div>
<div class="t " style="top:72.79px;font-size:10.18px;left:142.5px;transform-origin:0 0;transform:scaleX(0.85);background:#d4d0c8;padding:0 2px;margin-left:-2px;">Solve</div>
<svg style="left:141.5px;top:86.7px" width="12" height="12" viewBox="0 0 12 12"><circle cx="6" cy="6" r="5.2" fill="#fff"/><path d="M9.25 2.75 A4.6 4.6 0 0 0 2.75 9.25" stroke="#808080" stroke-width="1.1" fill="none"/><path d="M8.55 3.45 A3.6 3.6 0 0 0 3.45 8.55" stroke="#404040" stroke-width="1.0" fill="none"/></svg>
<svg style="left:141.5px;top:105.7px" width="12" height="12" viewBox="0 0 12 12"><circle cx="6" cy="6" r="5.2" fill="#fff"/><path d="M9.25 2.75 A4.6 4.6 0 0 0 2.75 9.25" stroke="#808080" stroke-width="1.1" fill="none"/><path d="M8.55 3.45 A3.6 3.6 0 0 0 3.45 8.55" stroke="#404040" stroke-width="1.0" fill="none"/><circle cx="6" cy="6" r="1.6" fill="#000"/></svg>
<div class="t " style="top:86.99px;font-size:10.18px;left:156.7px;transform-origin:0 0;transform:scaleX(0.85);">Autogrid</div>
<div class="t " style="top:105.99px;font-size:10.18px;left:156.7px;transform-origin:0 0;transform:scaleX(0.85);">Autofixture</div>
<div class="grp" style="left:15px;top:135px;width:193px;height:114px;"></div>
<div class="t " style="top:130.99px;font-size:10.18px;left:21.8px;transform-origin:0 0;transform:scaleX(0.85);background:#d4d0c8;padding:0 2px;margin-left:-2px;"><u>I</u>nput</div>
<div class="btn" style="left:28px;top:147px;width:166px;height:14px;"></div>
<div class="t " style="left:28px;width:166px;text-align:center;top:147.59px;font-size:10.18px;transform:scaleX(0.85);">IPC356 Options</div>
<div class="chk" style="left:28px;top:168px;width:11px;height:11px;"></div>
<div class="t " style="top:167.32px;font-size:10.47px;left:42.8px;transform-origin:0 0;transform:scaleX(0.85);">MANIA CAD 3.0</div>
<div class="chk cdis" style="left:52px;top:185px;width:11px;height:11px;"></div>
<div class="t dis" style="top:184.12px;font-size:10.47px;left:67px;transform-origin:0 0;transform:scaleX(0.85);">Enable Auto Toolchange</div>
<div class="chk cdis" style="left:52px;top:202px;width:11px;height:11px;"><svg width="11" height="11" viewBox="0 0 11 11" style="position:absolute;left:-1px;top:-1px"><path d="M2.5 4.8 L4.5 7.1 L8.6 2.9" stroke="#808080" stroke-width="1.9" fill="none"/></svg></div>
<div class="t dis" style="top:201.43px;font-size:10.35px;left:67px;transform-origin:0 0;transform:scaleX(0.85);">Use Default Conversion Table</div>
<div class="btn" style="left:136px;top:221px;width:62px;height:13px;"></div>
<div class="t dis" style="left:136px;width:62px;text-align:center;top:222.29px;font-size:10.18px;transform:scaleX(0.85);">...</div>
<div class="rz" style="left:221px;top:76px;width:199px;height:48px;"></div>
<div class="t " style="top:82.17px;font-size:10.64px;left:228.2px;transform-origin:0 0;transform:scaleX(0.89);font-weight:700;-webkit-text-stroke:0.3px currentColor;"><u>F</u>ixture Type:</div>
<div class="btn" style="left:326px;top:82px;width:19px;height:14px;"></div>
<div class="t " style="left:326px;width:19px;text-align:center;top:83.59px;font-size:10.18px;transform:scaleX(0.85);">Sys</div>
<div class="btn" style="left:351px;top:82px;width:62px;height:14px;"></div>
<div class="t " style="left:351px;width:62px;text-align:center;top:83.59px;font-size:10.18px;transform:scaleX(0.85);">Options</div>
<div class="sk" style="left:228px;top:103px;width:185px;height:16px;background:#ffffe8;"></div>
<div class="t " style="top:104.79px;font-size:10.18px;left:231px;transform-origin:0 0;transform:scaleX(0.85);">3.75 M MN MMS 0.30 mm (12 mil)</div>
<div class="btn" style="left:399px;top:104px;width:13px;height:14px;"></div>
<svg style="left:400.5px;top:107px" width="11" height="8" viewBox="0 0 11 8"><path d="M2 2 H9 L5.5 5.5 Z" fill="#000"/></svg>
<div class="rz" style="left:221px;top:127px;width:199px;height:47px;"></div>
<div class="t " style="top:132.7px;font-size:10.94px;left:228.2px;transform-origin:0 0;transform:scaleX(0.89);font-weight:700;-webkit-text-stroke:0.3px currentColor;"><u>U</u>sed Testpins:</div>
<div class="btn" style="left:301px;top:133px;width:19px;height:14px;"></div>
<div class="t " style="left:301px;width:19px;text-align:center;top:133.59px;font-size:10.18px;transform:scaleX(0.85);">Sys</div>
<div class="btn" style="left:324px;top:133px;width:42px;height:14px;"></div>
<div class="t " style="left:324px;width:42px;text-align:center;top:133.59px;font-size:10.18px;transform:scaleX(0.85);">Tools</div>
<div class="btn" style="left:372px;top:133px;width:41px;height:14px;"></div>
<div class="t " style="left:372px;width:41px;text-align:center;top:133.59px;font-size:10.18px;transform:scaleX(0.85);">Options</div>
<div class="sk" style="left:228px;top:153px;width:185px;height:17px;background:#ffffe8;"></div>
<div class="t " style="top:155.09px;font-size:10.18px;left:231px;transform-origin:0 0;transform:scaleX(0.85);">3.75 M MN MMS 0.30 mm (12 mil)</div>
<div class="btn" style="left:399px;top:154px;width:13px;height:15px;"></div>
<svg style="left:400.5px;top:157.5px" width="11" height="8" viewBox="0 0 11 8"><path d="M2 2 H9 L5.5 5.5 Z" fill="#000"/></svg>
<div class="grp" style="left:221px;top:182px;width:198px;height:67px;"></div>
<div class="t " style="top:177.59px;font-size:10.18px;left:227.8px;transform-origin:0 0;transform:scaleX(0.85);background:#d4d0c8;padding:0 2px;margin-left:-2px;">Autofixture Options</div>
<div class="chk" style="left:234px;top:191px;width:11px;height:11px;"></div>
<div class="t " style="top:191.09px;font-size:10.18px;left:249.3px;transform-origin:0 0;transform:scaleX(0.85);">Autoselect Fixture Side</div>
<div class="chk" style="left:234px;top:205px;width:11px;height:11px;"></div>
<div class="t " style="top:205.09px;font-size:10.18px;left:249.3px;transform-origin:0 0;transform:scaleX(0.85);">Use Existing Testpoints</div>
<div class="chk" style="left:234px;top:220px;width:11px;height:11px;"></div>
<div class="t " style="top:220.09px;font-size:10.18px;left:249.3px;transform-origin:0 0;transform:scaleX(0.85);">PreferTooling Pins (T+)</div>
<div class="chk" style="left:234px;top:234px;width:11px;height:11px;"></div>
<div class="t " style="top:233.91px;font-size:10.38px;left:249.3px;transform-origin:0 0;transform:scaleX(0.85);">Force Thru Holes Test on Both Sides</div>
<div class="grp" style="left:433px;top:78px;width:218px;height:62px;"></div>
<div class="t " style="top:73.39px;font-size:10.18px;left:439.6px;transform-origin:0 0;transform:scaleX(0.85);background:#d4d0c8;padding:0 2px;margin-left:-2px;">Splittest</div>
<div class="chk" style="left:445px;top:94px;width:11px;height:11px;"></div>
<div class="t " style="top:92.64px;font-size:11.45px;left:461px;transform-origin:0 0;transform:scaleX(0.71);font-weight:700;-webkit-text-stroke:0.3px currentColor;">Use Split</div>
<div class="chk cdis" style="left:445px;top:115px;width:11px;height:11px;"></div>
<div class="t dis" style="top:114.39px;font-size:10.18px;left:461.8px;transform-origin:0 0;transform:scaleX(0.85);">Try to Minimize Testpoints for 2nd Set</div>
<div class="grp" style="left:433px;top:158px;width:105px;height:91px;"></div>
<div class="t " style="top:154.29px;font-size:10.18px;left:439px;transform-origin:0 0;transform:scaleX(0.85);background:#d4d0c8;padding:0 2px;margin-left:-2px;">Auto<u>m</u>ode</div>
<div class="t " style="top:166.99px;font-size:10.18px;right:168.4px;transform-origin:100% 0;transform:scaleX(0.85);">Manual</div>
<div class="t " style="top:186.39px;font-size:10.18px;right:168.4px;transform-origin:100% 0;transform:scaleX(0.85);">Import Data</div>
<div class="t " style="top:205.79px;font-size:10.18px;right:168.4px;transform-origin:100% 0;transform:scaleX(0.85);">Autogrid</div>
<div class="t " style="top:224.59px;font-size:10.18px;right:168.4px;transform-origin:100% 0;transform:scaleX(0.85);">Postprocessing</div>
<div style="left:506.5px;top:170.2px;width:3px;height:1.2px;background:#000;"></div>
<div style="left:506.5px;top:191.5px;width:3px;height:1.2px;background:#000;"></div>
<div style="left:506.5px;top:212.2px;width:3px;height:1.2px;background:#000;"></div>
<div style="left:506.5px;top:232.9px;width:3px;height:1.2px;background:#000;"></div>
<div class="" style="left:513px;top:168px;width:11px;height:69px;background:#fff;border-top:1px solid #404040;border-left:1px solid #404040;border-right:1px solid #a0a0a0;box-shadow:inset 1px 1px 0 #808080;"></div>
<svg style="left:510px;top:229.5px" width="18" height="8" viewBox="0 0 18 8"><path d="M0.5 4 L4 0.5 H16.5 V7.5 H4 Z" fill="#d4d0c8" stroke="#404040" stroke-width="1"/><path d="M0.8 4 L4 0.8 H16" stroke="#fff" stroke-width="1" fill="none"/></svg>
<div class="grp" style="left:545px;top:158px;width:106px;height:91px;"></div>
<div class="t " style="top:154.29px;font-size:10.18px;left:552px;transform-origin:0 0;transform:scaleX(0.85);background:#d4d0c8;padding:0 2px;margin-left:-2px;">Other Options</div>
<div class="chk" style="left:552px;top:171px;width:11px;height:11px;"><svg width="11" height="11" viewBox="0 0 11 11" style="position:absolute;left:-1px;top:-1px"><path d="M2.5 4.8 L4.5 7.1 L8.6 2.9" stroke="#000" stroke-width="1.9" fill="none"/></svg></div>
<div class="t " style="top:171.39px;font-size:10.18px;left:568px;transform-origin:0 0;transform:scaleX(0.85);">Snap Board to Grid</div>
<div class="chk" style="left:565px;top:186px;width:11px;height:11px;"><svg width="11" height="11" viewBox="0 0 11 11" style="position:absolute;left:-1px;top:-1px"><path d="M2.5 4.8 L4.5 7.1 L8.6 2.9" stroke="#000" stroke-width="1.9" fill="none"/></svg></div>
<div class="t " style="top:185.59px;font-size:10.18px;left:579.7px;transform-origin:0 0;transform:scaleX(0.85);">Allow Rotation</div>
<div class="chk" style="left:552px;top:207px;width:11px;height:11px;"><svg width="11" height="11" viewBox="0 0 11 11" style="position:absolute;left:-1px;top:-1px"><path d="M2.5 4.8 L4.5 7.1 L8.6 2.9" stroke="#000" stroke-width="1.9" fill="none"/></svg></div>
<div class="t " style="top:207.39px;font-size:10.18px;left:568px;transform-origin:0 0;transform:scaleX(0.85);">Airholes</div>
<div class="chk" style="left:552px;top:224px;width:11px;height:11px;"><svg width="11" height="11" viewBox="0 0 11 11" style="position:absolute;left:-1px;top:-1px"><path d="M2.5 4.8 L4.5 7.1 L8.6 2.9" stroke="#000" stroke-width="1.9" fill="none"/></svg></div>
<div class="t " style="top:223.59px;font-size:10.18px;left:568px;transform-origin:0 0;transform:scaleX(0.85);">Supportpins</div>
<div class="rz" style="left:15px;top:259px;width:245px;height:185px;"></div>
<div class="t " style="top:265.87px;font-size:10.98px;left:21.7px;transform-origin:0 0;transform:scaleX(0.89);font-weight:700;-webkit-text-stroke:0.3px currentColor;"><u>T</u>ester Grid:</div>
<div class="t " style="top:268.39px;font-size:10.18px;left:127.2px;transform-origin:0 0;transform:scaleX(0.85);">View:</div>
<div class="chk" style="left:152px;top:267px;width:11px;height:11px;"><svg width="11" height="11" viewBox="0 0 11 11" style="position:absolute;left:-1px;top:-1px"><path d="M2.5 4.8 L4.5 7.1 L8.6 2.9" stroke="#000" stroke-width="1.9" fill="none"/></svg></div>
<div class="t " style="top:268.39px;font-size:10.18px;left:167.2px;transform-origin:0 0;transform:scaleX(0.85);">S</div>
<div class="chk" style="left:180px;top:267px;width:11px;height:11px;"><svg width="11" height="11" viewBox="0 0 11 11" style="position:absolute;left:-1px;top:-1px"><path d="M2.5 4.8 L4.5 7.1 L8.6 2.9" stroke="#000" stroke-width="1.9" fill="none"/></svg></div>
<div class="t " style="top:268.39px;font-size:10.18px;left:195.2px;transform-origin:0 0;transform:scaleX(0.85);">C</div>
<div class="chk" style="left:206px;top:267px;width:11px;height:11px;"><svg width="11" height="11" viewBox="0 0 11 11" style="position:absolute;left:-1px;top:-1px"><path d="M2.5 4.8 L4.5 7.1 L8.6 2.9" stroke="#000" stroke-width="1.9" fill="none"/></svg></div>
<div class="t " style="top:268.39px;font-size:10.18px;left:221.5px;transform-origin:0 0;transform:scaleX(0.85);">R</div>
<div class="btn" style="left:235px;top:266px;width:19px;height:14px;"></div>
<div class="t " style="left:235px;width:19px;text-align:center;top:267.59px;font-size:10.18px;transform:scaleX(0.85);">Sys</div>
<div class="t " style="top:282.93px;font-size:10.35px;left:21.7px;transform-origin:0 0;transform:scaleX(0.85);">MANIA Versa 200 MMS MS3 (19.2x16.0) (487x406)</div>
<svg style="left:0;top:0" width="668" height="492" viewBox="0 0 668 492"><rect x="21" y="299" width="232.6" height="138" fill="#fff"/><rect x="21" y="299" width="167.6" height="138" fill="#000"/><rect x="22.25" y="299.2" width="54.4" height="12.96" fill="#0000ff"/><rect x="22.25" y="313.66" width="54.4" height="12.21" fill="#0000ff"/><rect x="22.25" y="327.37" width="54.4" height="12.21" fill="#0000ff"/><rect x="22.25" y="341.08" width="54.4" height="12.21" fill="#0000ff"/><rect x="22.25" y="354.79" width="54.4" height="12.21" fill="#0000ff"/><rect x="22.25" y="368.5" width="54.4" height="12.21" fill="#0000ff"/><rect x="22.25" y="382.21" width="54.4" height="12.21" fill="#0000ff"/><rect x="22.25" y="395.92" width="54.4" height="12.21" fill="#0000ff"/><rect x="22.25" y="409.63" width="54.4" height="12.21" fill="#0000ff"/><rect x="22.25" y="423.34" width="54.4" height="12.21" fill="#0000ff"/><rect x="78.15" y="299.2" width="54.1" height="12.96" fill="#0000ff"/><rect x="78.15" y="313.66" width="54.1" height="12.21" fill="#0000ff"/><rect x="78.15" y="327.37" width="54.1" height="12.21" fill="#0000ff"/><rect x="78.15" y="341.08" width="54.1" height="12.21" fill="#0000ff"/><rect x="78.15" y="354.79" width="54.1" height="12.21" fill="#0000ff"/><rect x="78.15" y="368.5" width="54.1" height="12.21" fill="#0000ff"/><rect x="78.15" y="382.21" width="54.1" height="12.21" fill="#0000ff"/><rect x="78.15" y="395.92" width="54.1" height="12.21" fill="#0000ff"/><rect x="78.15" y="409.63" width="54.1" height="12.21" fill="#0000ff"/><rect x="78.15" y="423.34" width="54.1" height="12.21" fill="#0000ff"/><rect x="133.75" y="299.2" width="54.85" height="12.96" fill="#0000ff"/><rect x="133.75" y="313.66" width="54.85" height="12.21" fill="#0000ff"/><rect x="133.75" y="327.37" width="54.85" height="12.21" fill="#0000ff"/><rect x="133.75" y="341.08" width="54.85" height="12.21" fill="#0000ff"/><rect x="133.75" y="354.79" width="54.85" height="12.21" fill="#0000ff"/><rect x="133.75" y="368.5" width="54.85" height="12.21" fill="#0000ff"/><rect x="133.75" y="382.21" width="54.85" height="12.21" fill="#0000ff"/><rect x="133.75" y="395.92" width="54.85" height="12.21" fill="#0000ff"/><rect x="133.75" y="409.63" width="54.85" height="12.21" fill="#0000ff"/><rect x="133.75" y="423.34" width="54.85" height="12.21" fill="#0000ff"/></svg>
<div class="grp" style="left:267px;top:260px;width:384px;height:182px;"></div>
<div class="t " style="top:257.29px;font-size:10.18px;left:274.8px;transform-origin:0 0;transform:scaleX(0.85);background:#d4d0c8;padding:0 2px;margin-left:-2px;"><u>P</u>ostprocessing Options</div>
<div class="chk" style="left:281px;top:277px;width:11px;height:11px;"><svg width="11" height="11" viewBox="0 0 11 11" style="position:absolute;left:-1px;top:-1px"><path d="M2.5 4.8 L4.5 7.1 L8.6 2.9" stroke="#000" stroke-width="1.9" fill="none"/></svg></div>
<div class="t " style="top:276.79px;font-size:10.18px;left:295.8px;transform-origin:0 0;transform:scaleX(0.85);">Generate Drillfiles</div>
<div class="t " style="top:296.38px;font-size:10.3px;left:281.6px;transform-origin:0 0;transform:scaleX(0.85);">Text to be Drilled on Plates:</div>
<div class="btn" style="left:399px;top:295px;width:74px;height:15px;"></div>
<div class="t " style="left:399px;width:74px;text-align:center;top:298.19px;font-size:10.18px;transform:scaleX(0.85);">More text ...</div>
<div class="t " style="top:316.39px;font-size:10.18px;left:280.8px;transform-origin:0 0;transform:scaleX(0.85);">Job Name:</div>
<div class="sk" style="left:327px;top:313px;width:146px;height:16px;background:#fff;"></div>
<div class="t " style="top:315.23px;font-size:10.35px;left:330px;transform-origin:0 0;transform:scaleX(0.85);">TEST</div>
<div class="rz" style="left:281px;top:341px;width:199px;height:93px;"></div>
<div class="t " style="top:345.27px;font-size:10.64px;left:287.6px;transform-origin:0 0;transform:scaleX(0.89);font-weight:700;-webkit-text-stroke:0.3px currentColor;"><u>D</u>rilling Machine:</div>
<div class="btn" style="left:455px;top:344px;width:19px;height:14px;"></div>
<div class="t " style="left:455px;width:19px;text-align:center;top:345.79px;font-size:10.18px;transform:scaleX(0.85);">Sys</div>
<div class="sk" style="left:287px;top:360px;width:186px;height:68px;background:#ffffe8;"></div>
<div class="chk" style="left:290px;top:362px;width:9px;height:9px;"></div>
<div class="t " style="top:362.78px;font-size:8.86px;left:302.8px;transform-origin:0 0;transform:scaleX(0.97);">&lt;EXAMPLE machine&gt;</div>
<div class="chk" style="left:290px;top:372.5px;width:9px;height:9px;"><svg width="9" height="9" viewBox="0 0 9 9" style="position:absolute;left:-1px;top:-1px"><path d="M1.6 3.9 L3.5 6.1 L7.4 1.9" stroke="#000" stroke-width="1.9" fill="none"/></svg></div>
<div class="t " style="top:373.28px;font-size:8.86px;left:302.8px;transform-origin:0 0;transform:scaleX(0.97);">FG&nbsp; Alpha01&nbsp; SK</div>
<div class="chk" style="left:290px;top:383px;width:9px;height:9px;"><svg width="9" height="9" viewBox="0 0 9 9" style="position:absolute;left:-1px;top:-1px"><path d="M1.6 3.9 L3.5 6.1 L7.4 1.9" stroke="#000" stroke-width="1.9" fill="none"/></svg></div>
<div class="t " style="top:383.78px;font-size:8.86px;left:302.8px;transform-origin:0 0;transform:scaleX(0.97);">FG&nbsp; Hitachi&nbsp; SK</div>
<div class="chk" style="left:290px;top:393.5px;width:9px;height:9px;"><svg width="9" height="9" viewBox="0 0 9 9" style="position:absolute;left:-1px;top:-1px"><path d="M1.6 3.9 L3.5 6.1 L7.4 1.9" stroke="#000" stroke-width="1.9" fill="none"/></svg></div>
<div class="t " style="top:394.28px;font-size:8.86px;left:302.8px;transform-origin:0 0;transform:scaleX(0.97);">Ucam View</div>
<div class="chk" style="left:512px;top:283px;width:11px;height:11px;"><svg width="11" height="11" viewBox="0 0 11 11" style="position:absolute;left:-1px;top:-1px"><path d="M2.5 4.8 L4.5 7.1 L8.6 2.9" stroke="#000" stroke-width="1.9" fill="none"/></svg></div>
<div class="t " style="top:283.23px;font-size:10.35px;left:527.6px;transform-origin:0 0;transform:scaleX(0.85);">Tester and Repair Outputs</div>
<div class="btn" style="left:584px;top:302px;width:54px;height:15px;"></div>
<div class="t " style="left:584px;width:54px;text-align:center;top:304.79px;font-size:10.18px;transform:scaleX(0.85);">...</div>
<div class="chk" style="left:512px;top:333px;width:11px;height:11px;"><svg width="11" height="11" viewBox="0 0 11 11" style="position:absolute;left:-1px;top:-1px"><path d="M2.5 4.8 L4.5 7.1 L8.6 2.9" stroke="#000" stroke-width="1.9" fill="none"/></svg></div>
<div class="t " style="top:333.29px;font-size:10.18px;left:526.8px;transform-origin:0 0;transform:scaleX(0.85);">Delete Temporary Files</div>
<div class="chk" style="left:512px;top:361px;width:11px;height:11px;"></div>
<div class="t " style="top:361.19px;font-size:10.18px;left:526.8px;transform-origin:0 0;transform:scaleX(0.85);">Archive Job</div>
<div class="chk" style="left:512px;top:387px;width:11px;height:11px;"></div>
<div class="t " style="top:387.39px;font-size:10.18px;left:526.8px;transform-origin:0 0;transform:scaleX(0.85);">Run Customer Script</div>
<div class="" style="left:3px;top:453px;width:662px;height:1px;background:#ece9e2;"></div>
<div class="" style="left:4px;top:456px;width:244px;height:32px;background:#990000;"></div>
<div class="btn" style="left:17px;top:462px;width:60px;height:20px;"></div>
<div class="t dis" style="left:17px;width:60px;text-align:center;top:465.79px;font-size:10.18px;transform:scaleX(0.85);">Delete</div>
<div class="btn" style="left:97px;top:462px;width:60px;height:20px;"></div>
<div class="t " style="left:97px;width:60px;text-align:center;top:465.79px;font-size:10.18px;transform:scaleX(0.85);">Save As ...</div>
<div class="btn def" style="left:175px;top:462px;width:61px;height:20px;"></div>
<div class="t dis" style="left:175px;width:61px;text-align:center;top:465.79px;font-size:10.18px;transform:scaleX(0.85);">Save</div>
<div class="rz" style="left:275px;top:455px;width:87px;height:34px;border-right-color:#404040;border-bottom-color:#404040;"></div>
<div class="btn" style="left:288px;top:462px;width:61px;height:20px;"></div>
<div class="t " style="left:288px;width:61px;text-align:center;top:465.79px;font-size:10.18px;transform:scaleX(0.85);">Exit</div>
<div class="" style="left:387px;top:456px;width:278px;height:32px;background:#008000;"></div>
<div class="btn" style="left:400px;top:462px;width:60px;height:20px;"></div>
<div class="t dis" style="left:400px;width:60px;text-align:center;top:465.79px;font-size:10.18px;transform:scaleX(0.85);">Copy to Job</div>
<div class="btn def" style="left:479px;top:462px;width:60px;height:20px;"></div>
<div class="t " style="left:479px;width:60px;text-align:center;top:465.79px;font-size:10.18px;transform:scaleX(0.85);">Save</div>
<div class="btn def" style="left:556px;top:462px;width:95px;height:20px;"></div>
<div class="t " style="left:556px;width:95px;text-align:center;top:465.42px;font-size:10.59px;transform:scaleX(0.85);">Save and Run</div></div>
</body></html>
